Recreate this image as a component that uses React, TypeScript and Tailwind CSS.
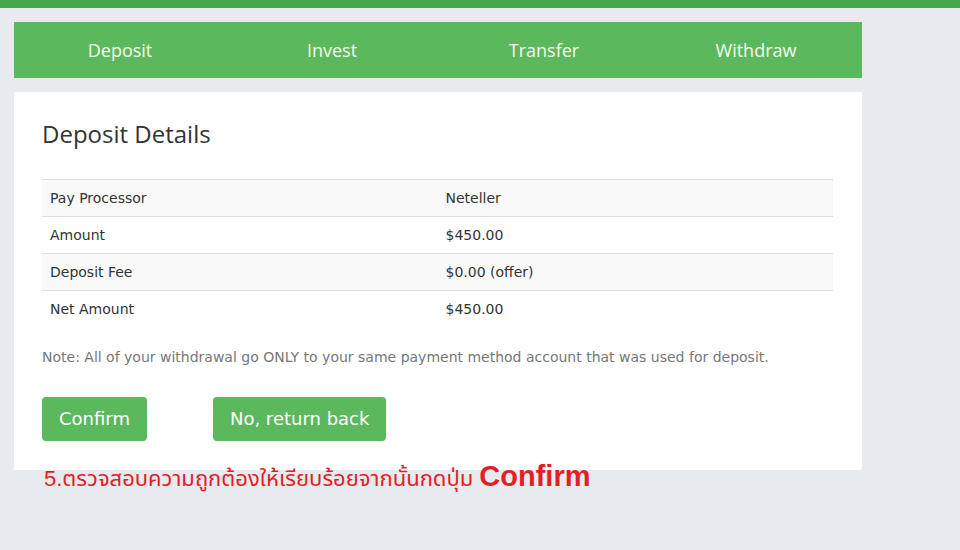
const tabs = ["Deposit", "Invest", "Transfer", "Withdraw"];

const rows = [
  { label: "Pay Processor", value: "Neteller" },
  { label: "Amount", value: "$450.00" },
  { label: "Deposit Fee", value: "$0.00 (offer)" },
  { label: "Net Amount", value: "$450.00" },
];

const App = () => {
  return (
    <div className="relative min-h-[550px] w-[960px] bg-[#e7eaef]">
      <div className="h-2 bg-[#47a84b]" />
      <div className="w-[848px] ml-[14px] pt-[14px]">
        <nav className="grid h-14 grid-cols-4 items-center bg-[#5cb85c] font-['Open_Sans',sans-serif] text-[18px] text-[#f6fbef]">
          {tabs.map((tab) => (
            <span key={tab} className="text-center">
              {tab}
            </span>
          ))}
        </nav>

        <div className="mt-[14px] h-[378px] bg-white px-7 pt-[26px]">
          <h2 className="font-['Open_Sans',sans-serif] text-[24px] leading-8 text-[#333]">Deposit Details</h2>

          <table className="mt-[29px] w-[791px] border-collapse font-['DejaVu_Sans',sans-serif] text-[14px] text-[#333]">
            <tbody>
              {rows.map((row, i) => (
                <tr key={row.label} className={i % 2 === 0 ? "bg-[#f9f9f9]" : "bg-white"}>
                  <td className="h-[37px] w-1/2 border-t border-[#dddddd] px-2 align-middle">{row.label}</td>
                  <td className="h-[37px] w-1/2 border-t border-[#dddddd] px-2 align-middle">{row.value}</td>
                </tr>
              ))}
            </tbody>
          </table>

          <p className="mt-[19px] font-['DejaVu_Sans',sans-serif] text-[14px] text-[#777]">
            Note: All of your withdrawal go ONLY to your same payment method account that was used for deposit.
          </p>

          <div className="mt-[29px] flex gap-[66px] font-['DejaVu_Sans',sans-serif] text-[18px] text-white">
            <button className="h-11 rounded bg-[#5cb85c] px-[17px]">Confirm</button>
            <button className="h-11 rounded bg-[#5cb85c] px-[17px]">No, return back</button>
          </div>
        </div>
      </div>

      <p className="absolute left-[44px] top-[455px] font-['Liberation_Sans','Noto_Sans_Thai',sans-serif] text-[22px] text-[#e41e26]">
        5.ตรวจสอบความถูกต้องให้เรียบร้อยจากนั้นกดปุ่ม{" "}
        <span className="text-[29px] font-bold">Confirm</span>
      </p>
    </div>
  );
};

export default App;
